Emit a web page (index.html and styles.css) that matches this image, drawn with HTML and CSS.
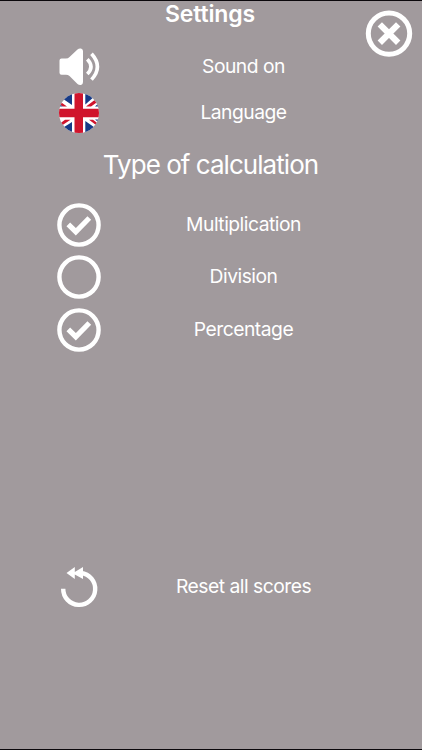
FILE: index.html
```html
<!DOCTYPE html>
<html lang="en">
<head>
<meta charset="utf-8">
<title>Settings</title>
<link rel="stylesheet" href="styles.css">
</head>
<body>
<main class="screen">
  <h1 class="title">Settings</h1>
  <button class="close" aria-label="Close">
    <svg width="48" height="48" viewBox="0 0 48 48"><circle cx="24" cy="24.600" r="20.700" fill="none" stroke="#fff" stroke-width="5"/><path d="M14.800 15.400 33.200 33.800M33.200 15.400 14.800 33.800" stroke="#fff" stroke-width="6.200"/></svg>
  </button>
  <section class="general">
    <div class="row">
      <svg class="icon" width="44" height="44" viewBox="0 0 44 44"><path d="M4.500 14.500H9Q11 14.500 12.500 13L20.500 5.500Q22 4 24 4.500Q26 5 26 7V38Q26 40.500 24 41Q22 41.300 20.500 40L12.500 32Q11 30.700 9 30.700H4.500Q2.500 30.700 2.500 28.700V16.500Q2.500 14.500 4.500 14.500Z" fill="#fff"/><path d="M30.300 15.300Q37.600 22.700 30.300 30.100M34.500 9.800Q46.300 22.700 34.500 35.600" fill="none" stroke="#fff" stroke-width="3.600"/></svg>
      <span class="label">Sound on</span>
    </div>
    <div class="row">
      <svg class="icon" width="44" height="44" viewBox="0 0 44 44"><defs><clipPath id="disc"><circle cx="22" cy="22" r="20"/></clipPath></defs><g clip-path="url(#disc)"><path fill="#fff" d="M0 0H44V44H0Z"/><path fill="#173a86" d="M4 6.500 8 2H15V14ZM28.300 1H36L38 5 28.300 13.500ZM2.500 30.500H15V43H8L4.500 37ZM28.300 30 39 37.500 36 43H28.300ZM2 12.500 6 15.500H2ZM42 12V15.500H38ZM42 28.500V31.500L38 28.500Z"/><path fill="#fff" d="M2 30 15 28.500V31L4 38Z"/><path fill="#d0142c" d="M17.500 0H26V17.700H44V26.200H26V44H17.500V26.200H0V17.700H17.500ZM29 15.500 38 8.800 40 11.300 34 15.500ZM3 32.500 8 28.800H13.500L4.500 34.800ZM3 10.500 10 15.500H6L2 12.700ZM32 28.800 41 35.500V32.500L36 28.800Z"/></g></svg>
      <span class="label">Language</span>
    </div>
  </section>
  <h2 class="heading">Type of calculation</h2>
  <section class="types">
    <div class="row">
      <svg class="icon" width="44" height="44" viewBox="0 0 44 44"><circle cx="22" cy="22" r="19.600" fill="none" stroke="#fff" stroke-width="4.400"/><path d="M11.300 21.300 18.800 28.700 32.300 15" fill="none" stroke="#fff" stroke-width="5.200"/></svg>
      <span class="label">Multiplication</span>
    </div>
    <div class="row">
      <svg class="icon" width="44" height="44" viewBox="0 0 44 44"><circle cx="22" cy="22" r="19.600" fill="none" stroke="#fff" stroke-width="4.400"/></svg>
      <span class="label raised">Division</span>
    </div>
    <div class="row">
      <svg class="icon" width="44" height="44" viewBox="0 0 44 44"><circle cx="22" cy="22" r="19.600" fill="none" stroke="#fff" stroke-width="4.400"/><path d="M11.300 21.300 18.800 28.700 32.300 15" fill="none" stroke="#fff" stroke-width="5.200"/></svg>
      <span class="label raised">Percentage</span>
    </div>
  </section>
  <div class="row reset">
    <svg class="icon" width="44" height="44" viewBox="0 0 44 44"><path d="M6.200 23.700A16 16 0 1 0 24 8" fill="none" stroke="#fff" stroke-width="4.400"/><path d="M9.500 8 17.800 2V7L26 2V14L17.800 9.500V14Z" fill="#fff"/></svg>
    <span class="label raised">Reset all scores</span>
  </div>
</main>
</body>
</html>
```
FILE: styles.css
```css
* {
  box-sizing: border-box;
}

body {
  margin: 0;
  background: #a19a9d;
}

.screen {
  position: relative;
  display: flex;
  flex-direction: column;
  height: 750px;
  border-top: 1px solid #0b080c;
  border-bottom: 1px solid #0b080c;
  background: #a19a9d;
  color: #fff;
  font-family: Inter, "Liberation Sans", sans-serif;
}

.title {
  margin: 0;
  height: 43px;
  padding-right: 2px;
  font-size: 23px;
  font-weight: 600;
  line-height: 26px;
  letter-spacing: -0.150px;
  text-align: center;
}

.close {
  position: absolute;
  top: 8px;
  right: 9px;
  padding: 0;
  border: 0;
  background: none;
}

.close svg,
.icon {
  display: block;
}

.row {
  display: grid;
  grid-template-columns: 44px 285px;
  align-items: center;
  height: 44px;
  padding-left: 57px;
}

.label {
  justify-self: center;
  font-size: 19.300px;
  font-weight: 400;
  line-height: 24px;
  letter-spacing: -0.500px;
  margin-top: -1px;
  white-space: nowrap;
}

.label.raised {
  margin-top: -3px;
}

.general {
  display: grid;
  row-gap: 3px;
}

.general .label {
  margin-top: -2px;
}

.general .row:first-child .label {
  margin-top: 0;
}

.heading {
  margin: 13px 0 20.700px;
  padding-right: 1px;
  font-size: 26px;
  font-weight: 400;
  line-height: 34px;
  letter-spacing: -0.960px;
  text-align: center;
}

.types {
  display: grid;
  row-gap: 8.700px;
}

.reset {
  margin-top: 213px;
}
```
